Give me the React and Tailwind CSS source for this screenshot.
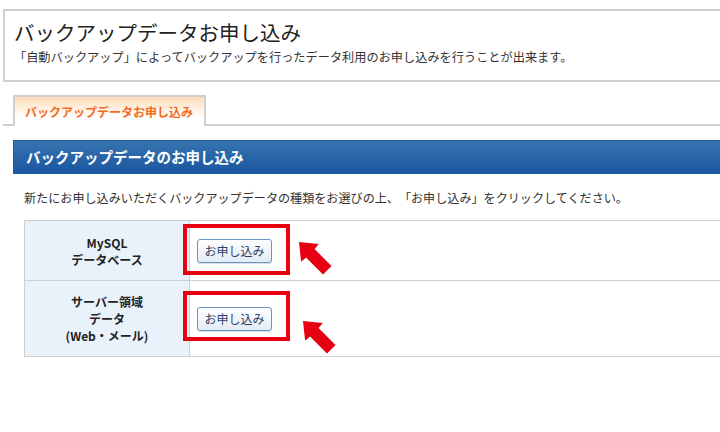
import React from 'react'

const font = { fontFamily: '"Noto Sans CJK JP", "Noto Sans", sans-serif' }

const Arrow = ({ className }) => (
    <svg className={className} width="34" height="34" viewBox="0 0 34 34">
        <g transform="translate(1 1)">
            <polygon
                points="0,0 19.8,2.1 15.56,7.07 32.5,24 24,32.5 7.07,15.56 2.1,19.8"
                fill="#e60012"
            />
        </g>
    </svg>
)

const ApplyButton = () => (
    <button className="h-[24px] w-[75px] rounded-[3px] border border-[#6a93c8] bg-gradient-to-b from-white to-[#e3ebf5] text-[12px] leading-none text-[#2c3e66] shadow-[0_1px_1px_rgba(0,0,0,0.15)]">
        お申し込み
    </button>
)

const App = () => {
    return (
        <div className="w-[720px] h-[432px] overflow-hidden bg-white text-[#333] [text-spacing-trim:space-all]" style={font}>
            {/* page header */}
            <div className="mt-[9px] ml-[3px] w-[740px] h-[73px] border-2 border-[#cfcfcf] pl-[9px] pt-[9px]">
                <h1 className="text-[20.5px] leading-[25px] text-[#222]">バックアップデータお申し込み</h1>
                <p className="mt-[4px] text-[12.2px] leading-[16px]">
                    「自動バックアップ」によってバックアップを行ったデータ利用のお申し込みを行うことが出来ます。
                </p>
            </div>

            {/* tabs */}
            <div className="mt-[13px] ml-[3px] w-[740px] flex border-b-2 border-[#cfcfcf]">
                <div className="ml-[10px] -mb-[2px] w-[193px] h-[31px] flex items-center border-2 border-b-0 border-[#cfcfcf] bg-gradient-to-b from-[#fddcb8] via-white via-70% to-white pl-[10px]">
                    <span className="text-[12px] font-bold text-[#f26b1d]">バックアップデータお申し込み</span>
                </div>
            </div>

            {/* section title */}
            <div className="mt-[14px] ml-[13px] w-[740px] h-[34px] flex items-center border border-[#1f5a9a] bg-gradient-to-b from-[#3674b0] to-[#1b56a0] pl-[12px]">
                <h2 className="text-[14.5px] font-bold text-white">バックアップデータのお申し込み</h2>
            </div>

            <p className="mt-[16px] ml-[24px] text-[12.1px] leading-[16px]">
                新たにお申し込みいただくバックアップデータの種類をお選びの上、「お申し込み」をクリックしてください。
            </p>

            {/* table */}
            <div className="mt-[14px] ml-[24px] w-[740px] border-l border-b border-[#cfcfcf]">
                <div className="relative flex h-[60px] border-t border-[#cfcfcf]">
                    <div className="w-[165px] flex flex-col items-center justify-center border-r border-[#cfcfcf] bg-[#e9f1fa] text-[12px] font-bold leading-[17px] text-[#222]">
                        <span>MySQL</span>
                        <span>データベース</span>
                    </div>
                    <div className="flex items-center pl-[7px]">
                        <ApplyButton />
                    </div>
                    <div className="absolute left-[158px] top-[3px] w-[107px] h-[51px] border-[4px] border-[#e60012]" />
                    <Arrow className="absolute left-[273px] top-[20px]" />
                </div>
                <div className="relative flex h-[76px] border-t border-[#cfcfcf]">
                    <div className="w-[165px] flex flex-col items-center justify-center border-r border-[#cfcfcf] bg-[#e9f1fa] text-[12px] font-bold leading-[17px] text-[#222]">
                        <span>サーバー領域</span>
                        <span>データ</span>
                        <span>(Web・メール)</span>
                    </div>
                    <div className="flex items-center pl-[7px]">
                        <ApplyButton />
                    </div>
                    <div className="absolute left-[158px] top-[10px] w-[107px] h-[50px] border-[4px] border-[#e60012]" />
                    <Arrow className="absolute left-[277px] top-[39px]" />
                </div>
            </div>
        </div>
    )
}

export default App
